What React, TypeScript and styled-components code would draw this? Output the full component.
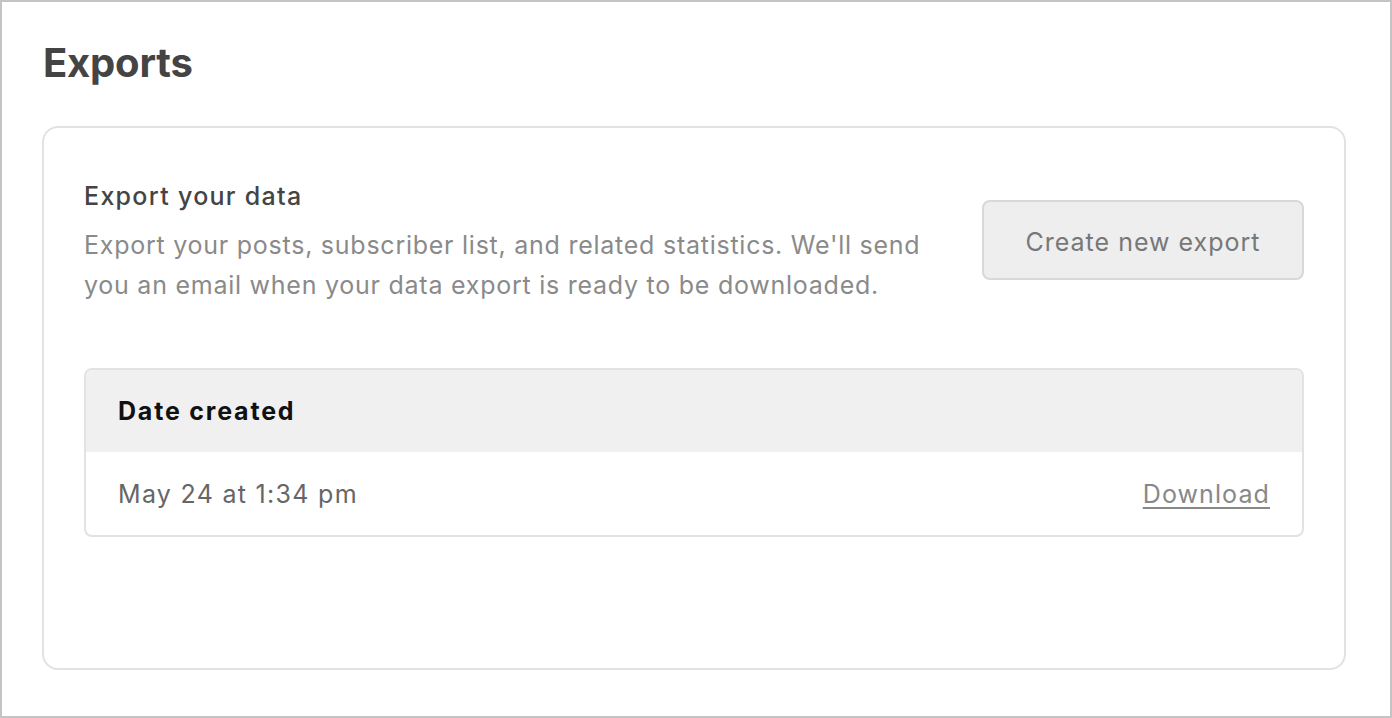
import styled, { createGlobalStyle } from "styled-components";

const GlobalStyle = createGlobalStyle`
    html, body {
        margin: 0;
        padding: 0;
        background: #ffffff;
    }
    body {
        font-family: Inter, "Noto Sans", Arial, sans-serif;
        -webkit-font-smoothing: antialiased;
    }
`;

const Frame = styled.div`
    box-sizing: border-box;
    width: 1392px;
    height: 718px;
    border: 2px solid #c4c4c4;
    padding: 37px 44px 0 40px;
    background: #fff;
`;

const Title = styled.h1`
    margin: 0 0 39px 1px;
    font-size: 40px;
    line-height: 48px;
    font-weight: 700;
    color: #444;
    letter-spacing: -0.2px;
`;

const Card = styled.div`
    box-sizing: border-box;
    height: 544px;
    border: 2px solid #e2e2e2;
    border-radius: 16px;
    padding: 52px 40px 0 40px;
`;

const Top = styled.div`
    display: flex;
    justify-content: space-between;
    align-items: flex-start;
`;

const Intro = styled.div`
    display: flex;
    flex-direction: column;
`;

const Heading = styled.h2`
    margin: 0 0 13px 0;
    font-size: 25px;
    line-height: 32px;
    font-weight: 500;
    letter-spacing: 1.3px;
    color: #444;
`;

const Description = styled.p`
    margin: 0;
    max-width: 860px;
    font-size: 25px;
    line-height: 40px;
    font-weight: 400;
    letter-spacing: 0.75px;
    color: #8a8a8a;
`;

const Button = styled.button`
    box-sizing: border-box;
    margin-top: 20px;
    width: 322px;
    height: 80px;
    padding: 4px 0 0 0;
    border: 2px solid #d8d8d8;
    border-radius: 8px;
    background: #eeeeee;
    color: #777;
    font-family: inherit;
    font-size: 25px;
    font-weight: 400;
    letter-spacing: 1px;
    cursor: pointer;
`;

const Table = styled.div`
    margin-top: 63px;
    border: 2px solid #e2e2e2;
    border-radius: 8px;
    overflow: hidden;
`;

const HeaderRow = styled.div`
    display: flex;
    align-items: center;
    height: 82px;
    padding: 0 32px;
    background: #f0f0f0;
    font-size: 25px;
    font-weight: 700;
    letter-spacing: 1.8px;
    color: #111;
`;

const Row = styled.div`
    display: flex;
    align-items: center;
    justify-content: space-between;
    height: 83px;
    padding: 0 32px;
    font-size: 25px;
    letter-spacing: 1.3px;
    color: #666;
`;

const Link = styled.a`
    color: #888;
    letter-spacing: 1.1px;
    text-decoration: underline;
    text-underline-offset: 4px;
    text-decoration-thickness: 2px;
    cursor: pointer;
`;

const App = () => {
    return (
        <>
            <GlobalStyle />
            <Frame>
                <Title>Exports</Title>
                <Card>
                    <Top>
                        <Intro>
                            <Heading>Export your data</Heading>
                            <Description>
                                Export your posts, subscriber list, and related statistics. We'll send you an email when your data export is ready to be downloaded.
                            </Description>
                        </Intro>
                        <Button>Create new export</Button>
                    </Top>
                    <Table>
                        <HeaderRow>Date created</HeaderRow>
                        <Row>
                            <span>May 24 at 1:34 pm</span>
                            <Link>Download</Link>
                        </Row>
                    </Table>
                </Card>
            </Frame>
        </>
    );
};

export default App;
